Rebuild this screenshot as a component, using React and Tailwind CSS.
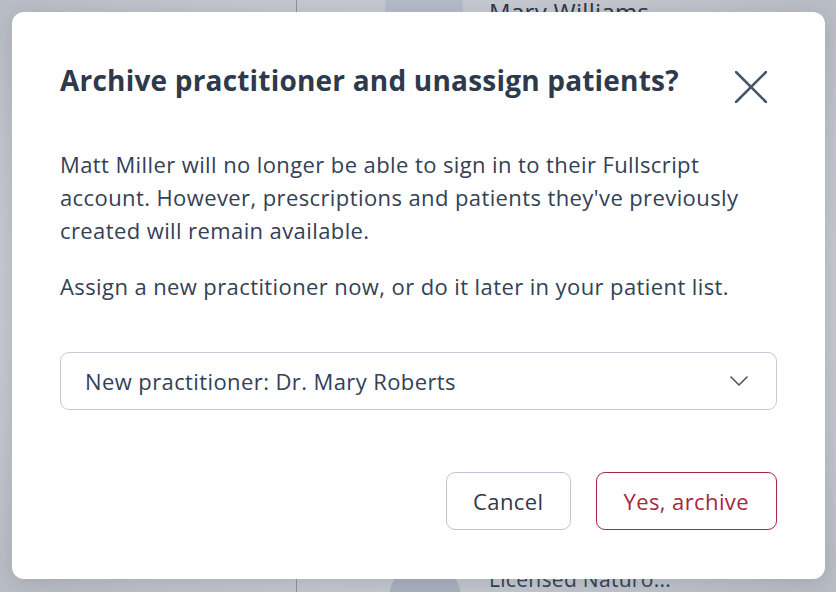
import React from 'react';

const FONT = { fontFamily: '"Open Sans", "Noto Sans", sans-serif' };

function CloseIcon() {
  return (
    <svg width="32" height="32" viewBox="0 0 32 32" fill="none" stroke="#475569" strokeWidth="2.6" strokeLinecap="round">
      <path d="M1 1 L31 31" />
      <path d="M31 1 L1 31" />
    </svg>
  );
}

function Chevron() {
  return (
    <svg width="18" height="10" viewBox="0 0 18 10" fill="none" stroke="#475569" strokeWidth="1.6" strokeLinecap="round" strokeLinejoin="round">
      <path d="M1 1 L9 9 L17 1" />
    </svg>
  );
}

export default function App() {
  return (
    <div className="relative w-[836px] h-[592px] overflow-hidden bg-[#cfd2d8]" style={FONT}>
      {/* page behind the dialog */}
      <div className="flex h-full">
        <div className="w-[297px] h-full border-r border-[#8e9bb0]" />
        <div className="flex-1 flex flex-col justify-between pl-[88px]">
          <div className="flex items-start gap-[26px] -mt-[30px]">
            <div className="w-[78px] h-[80px] rounded-full bg-[#bcc3cf]" />
            <span className="mt-[24px] text-[24px] tracking-[0.3px] text-[#2f3846]">Mary Williams</span>
          </div>
          <div className="flex items-start gap-7 -mb-[50px]">
            <div className="w-[72px] h-[80px] rounded-full bg-[#b2bac7] ml-[4px]" />
            <span className="mt-[2px] text-[21px] tracking-[0.3px] text-[#3a4352]">Licensed Naturo...</span>
          </div>
        </div>
      </div>
      <div className="absolute inset-0 bg-[radial-gradient(ellipse_at_center,rgba(0,0,0,0)_55%,rgba(30,40,60,0.12)_100%)]" />

      {/* dialog */}
      <div className="absolute left-[12px] top-[12px] w-[813px] h-[567px] bg-white rounded-[12px] shadow-[0_4px_24px_rgba(30,41,59,0.18)] px-12 pt-12 pb-[49px] flex flex-col text-[#334155]">
        <div className="flex items-start justify-between">
          <h2 className="text-[28px] font-bold leading-[40px] tracking-[0.2px] text-[#2e3a4b]">Archive practitioner and unassign patients?</h2>
          <button className="mt-[11px] mr-[10px]" aria-label="Close">
            <CloseIcon />
          </button>
        </div>

        <p className="mt-[45px] text-[22px] leading-[33px] tracking-[0.4px]">
          Matt Miller will no longer be able to sign in to their Fullscript account. However, prescriptions and patients they've previously created will remain available.
        </p>
        <p className="mt-[23px] text-[22px] leading-[33px] tracking-[0.4px]">
          Assign a new practitioner now, or do it later in your patient list.
        </p>

        <div className="mt-[49px] h-[58px] rounded-[9px] border border-[#c3cbd7] flex items-center justify-between pl-6 pr-[28px] text-[22px] tracking-[0.4px]">
          <span>New practitioner: Dr. Mary Roberts</span>
          <Chevron />
        </div>

        <div className="mt-auto flex justify-end gap-[25px]">
          <button className="h-[58px] px-[26px] rounded-[9px] border border-[#bcc7d6] text-[22px] tracking-[0.4px] text-[#2f3a4a]">
            Cancel
          </button>
          <button className="h-[58px] px-[27px] rounded-[9px] border border-[#a6273e] text-[22px] tracking-[0.4px] text-[#a6273e]">
            Yes, archive
          </button>
        </div>
      </div>
    </div>
  );
}
